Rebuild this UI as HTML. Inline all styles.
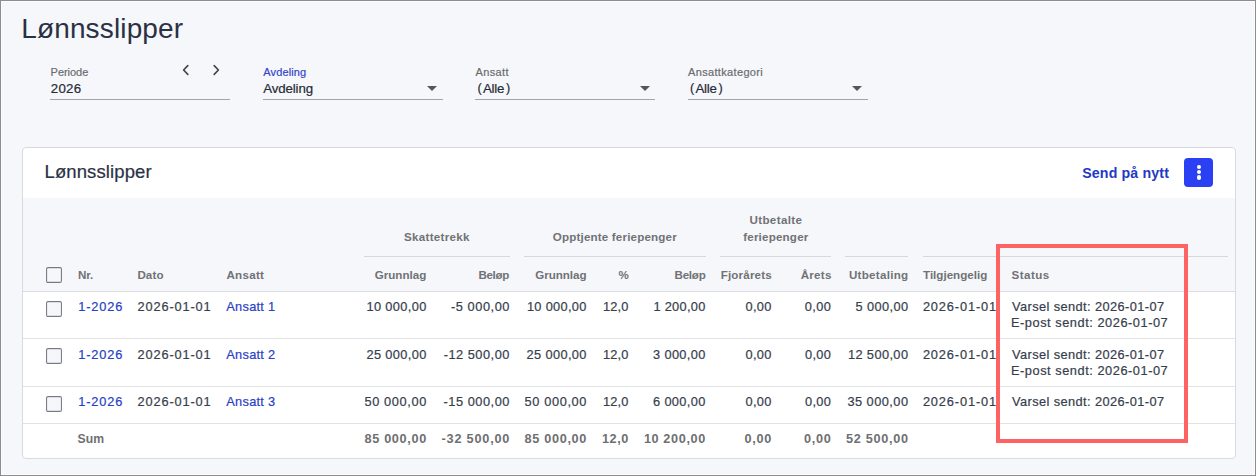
<!DOCTYPE html>
<html lang="no">
<head>
<meta charset="utf-8">
<title>Lønnsslipper</title>
<style>
  html, body { margin: 0; padding: 0; }
  body { width: 1256px; height: 476px; overflow: hidden; position: relative; background: #f6f7fb; font-family: "Liberation Sans", sans-serif; }
  .frame { position: absolute; left: 0; top: 0; width: 1254px; height: 474px; border: 1px solid #8d8d8f; box-shadow: inset 0 0 0 1px #fcfcfe; pointer-events: none; z-index: 10; }
  .t { position: absolute; white-space: nowrap; font-family: "Liberation Sans", sans-serif; }
  .r { -webkit-text-stroke: 0.2px currentColor; }
  .uline { position: absolute; height: 1px; background: #a3a4a8; }
  .tri { position: absolute; width: 0; height: 0; border-left: 5px solid transparent; border-right: 5px solid transparent; border-top: 5px solid #555659; }
  .chev { position: absolute; }
  .card { position: absolute; left: 22px; top: 147px; width: 1212px; height: 310px; border: 1px solid #d9dadf; border-radius: 4px; background: #fff; overflow: hidden; }
  .thead { position: absolute; left: 0; top: 50px; width: 1212px; height: 93px; background: #f6f7fb; border-bottom: 1px solid #dcdde2; }
  .rowline { position: absolute; left: 0; width: 1212px; height: 1px; background: #e1e2e6; }
  .gline { position: absolute; top: 256px; height: 1px; background: #d7d8dd; }
  .cb { position: absolute; }
  .btn { position: absolute; left: 1184px; top: 158px; width: 29px; height: 29px; background: #2b3ff3; border-radius: 4px; }
  .dot { position: absolute; left: 12.8px; width: 4.4px; height: 4.4px; border-radius: 50%; background: #fff; }
  .red { position: absolute; left: 996px; top: 244px; width: 184px; height: 191px; border: 4px solid #fe6262; z-index: 5; }
</style>
</head>
<body>
  <!-- filters -->
  <div class="uline" style="left:50px;top:99px;width:180px"></div>
  <div class="uline" style="left:263px;top:99px;width:180px"></div>
  <div class="uline" style="left:475px;top:99px;width:180px"></div>
  <div class="uline" style="left:688px;top:99px;width:180px"></div>
  <div class="tri" style="left:427.3px;top:86px"></div>
  <div class="tri" style="left:639.7px;top:86px"></div>
  <div class="tri" style="left:852.2px;top:86px"></div>
  <svg class="chev" style="left:180px;top:63px" width="12" height="14" viewBox="0 0 12 14"><path d="M7.8 2.6 L3.6 7 L7.8 11.4" fill="none" stroke="#3d4350" stroke-width="1.6" stroke-linecap="round" stroke-linejoin="round"/></svg>
  <svg class="chev" style="left:210px;top:63px" width="12" height="14" viewBox="0 0 12 14"><path d="M4.2 2.6 L8.4 7 L4.2 11.4" fill="none" stroke="#3d4350" stroke-width="1.6" stroke-linecap="round" stroke-linejoin="round"/></svg>

  <!-- card -->
  <div class="card">
    <div class="thead"></div>
    <div class="rowline" style="top:190px"></div>
    <div class="rowline" style="top:238px"></div>
    <div class="rowline" style="top:275px"></div>
  </div>
  <div class="gline" style="left:364px;width:146px"></div>
  <div class="gline" style="left:524px;width:182px"></div>
  <div class="gline" style="left:720px;width:111px"></div>
  <div class="gline" style="left:845px;width:63px"></div>
  <div class="gline" style="left:923px;width:305px"></div>

  <svg class="cb" style="left:46px;top:267px" width="16" height="16" viewBox="0 0 16 16"><rect x="0.6" y="0.6" width="14.8" height="14.8" rx="1.4" fill="#fbfbfd" stroke="#767a86" stroke-width="1.1"/><rect x="2.2" y="2.2" width="11.6" height="11.6" fill="#f6f7fb"/></svg>
  <svg class="cb" style="left:46px;top:301px" width="16" height="16" viewBox="0 0 16 16"><rect x="0.6" y="0.6" width="14.8" height="14.8" rx="1.4" fill="#fff" stroke="#767a86" stroke-width="1.1"/><rect x="2.2" y="2.2" width="11.6" height="11.6" fill="#f5f6fa"/></svg>
  <svg class="cb" style="left:46px;top:348px" width="16" height="16" viewBox="0 0 16 16"><rect x="0.6" y="0.6" width="14.8" height="14.8" rx="1.4" fill="#fff" stroke="#767a86" stroke-width="1.1"/><rect x="2.2" y="2.2" width="11.6" height="11.6" fill="#f5f6fa"/></svg>
  <svg class="cb" style="left:46px;top:396px" width="16" height="16" viewBox="0 0 16 16"><rect x="0.6" y="0.6" width="14.8" height="14.8" rx="1.4" fill="#fff" stroke="#767a86" stroke-width="1.1"/><rect x="2.2" y="2.2" width="11.6" height="11.6" fill="#f5f6fa"/></svg>

  <div class="btn"><div class="dot" style="top:6.7px"></div><div class="dot" style="top:12px"></div><div class="dot" style="top:17.3px"></div></div>

  <div class="red"></div>
  <div class="frame"></div>
<div class="t" style="left:21.20px;top:14.70px;font-size:28px;line-height:28px;font-weight:400;letter-spacing:0.147px;color:#2a3144">Lønnsslipper</div>
<div class="t r" style="left:50.60px;top:66.90px;font-size:11px;line-height:11px;font-weight:400;letter-spacing:-0.033px;color:#6a6c70">Periode</div>
<div class="t r" style="left:50.80px;top:81.90px;font-size:13.3px;line-height:13.3px;font-weight:400;letter-spacing:0.238px;color:#262b36">2026</div>
<div class="t r" style="left:263.30px;top:66.60px;font-size:11px;line-height:11px;font-weight:400;letter-spacing:0.117px;color:#3344cc">Avdeling</div>
<div class="t r" style="left:263.30px;top:81.90px;font-size:13.3px;line-height:13.3px;font-weight:400;letter-spacing:-0.139px;color:#262b36">Avdeling</div>
<div class="t r" style="left:475.50px;top:66.80px;font-size:11px;line-height:11px;font-weight:400;letter-spacing:0.374px;color:#6a6c70">Ansatt</div>
<div class="t r" style="left:477.60px;top:81.80px;font-size:12.7px;line-height:12.7px;font-weight:400;letter-spacing:0.000px;color:#262b36">(</div>
<div class="t r" style="left:483.00px;top:81.90px;font-size:13.3px;line-height:13.3px;font-weight:400;letter-spacing:-0.259px;color:#262b36">Alle</div>
<div class="t r" style="left:505.90px;top:81.80px;font-size:12.7px;line-height:12.7px;font-weight:400;letter-spacing:0.000px;color:#262b36">)</div>
<div class="t r" style="left:688.00px;top:66.80px;font-size:11px;line-height:11px;font-weight:400;letter-spacing:0.340px;color:#6a6c70">Ansattkategori</div>
<div class="t r" style="left:690.10px;top:81.80px;font-size:12.7px;line-height:12.7px;font-weight:400;letter-spacing:0.000px;color:#262b36">(</div>
<div class="t r" style="left:695.50px;top:81.90px;font-size:13.3px;line-height:13.3px;font-weight:400;letter-spacing:-0.259px;color:#262b36">Alle</div>
<div class="t r" style="left:718.40px;top:81.80px;font-size:12.7px;line-height:12.7px;font-weight:400;letter-spacing:0.000px;color:#262b36">)</div>
<div class="t r" style="left:44.50px;top:162.90px;font-size:18.5px;line-height:18.5px;font-weight:400;letter-spacing:0.113px;color:#2a3144">Lønnsslipper</div>
<div class="t" style="left:1082.20px;top:166.00px;font-size:14.2px;line-height:14.2px;font-weight:700;letter-spacing:0.145px;color:#2338c4">Send på nytt</div>
<div class="t" style="left:403.90px;top:231.30px;font-size:11.6px;line-height:11.6px;font-weight:700;letter-spacing:0.313px;color:#707275">Skattetrekk</div>
<div class="t" style="left:552.80px;top:231.00px;font-size:11.6px;line-height:11.6px;font-weight:700;letter-spacing:0.172px;color:#707275">Opptjente feriepenger</div>
<div class="t" style="left:749.40px;top:214.10px;font-size:11.6px;line-height:11.6px;font-weight:700;letter-spacing:0.381px;color:#707275">Utbetalte</div>
<div class="t" style="left:743.20px;top:230.70px;font-size:11.6px;line-height:11.6px;font-weight:700;letter-spacing:0.197px;color:#707275">feriepenger</div>
<div class="t" style="left:77.90px;top:268.90px;font-size:11.6px;line-height:11.6px;font-weight:700;letter-spacing:-0.022px;color:#707275">Nr.</div>
<div class="t" style="left:137.40px;top:268.90px;font-size:11.6px;line-height:11.6px;font-weight:700;letter-spacing:0.106px;color:#707275">Dato</div>
<div class="t" style="left:226.40px;top:268.90px;font-size:11.6px;line-height:11.6px;font-weight:700;letter-spacing:0.298px;color:#707275">Ansatt</div>
<div class="t" style="left:374.70px;top:268.90px;font-size:11.6px;line-height:11.6px;font-weight:700;letter-spacing:0.008px;color:#707275">Grunnlag</div>
<div class="t" style="left:478.40px;top:268.90px;font-size:11.6px;line-height:11.6px;font-weight:700;letter-spacing:-0.306px;color:#707275">Beløp</div>
<div class="t" style="left:535.20px;top:268.90px;font-size:11.6px;line-height:11.6px;font-weight:700;letter-spacing:-0.035px;color:#707275">Grunnlag</div>
<div class="t" style="left:618.40px;top:268.90px;font-size:11.6px;line-height:11.6px;font-weight:700;letter-spacing:0.129px;color:#707275">%</div>
<div class="t" style="left:674.50px;top:268.90px;font-size:11.6px;line-height:11.6px;font-weight:700;letter-spacing:-0.231px;color:#707275">Beløp</div>
<div class="t" style="left:720.70px;top:268.90px;font-size:11.6px;line-height:11.6px;font-weight:700;letter-spacing:0.179px;color:#707275">Fjorårets</div>
<div class="t" style="left:800.70px;top:268.90px;font-size:11.6px;line-height:11.6px;font-weight:700;letter-spacing:0.252px;color:#707275">Årets</div>
<div class="t" style="left:848.90px;top:268.90px;font-size:11.6px;line-height:11.6px;font-weight:700;letter-spacing:0.278px;color:#707275">Utbetaling</div>
<div class="t" style="left:923.00px;top:268.90px;font-size:11.6px;line-height:11.6px;font-weight:700;letter-spacing:0.007px;color:#707275">Tilgjengelig</div>
<div class="t" style="left:1011.50px;top:268.90px;font-size:11.6px;line-height:11.6px;font-weight:700;letter-spacing:0.463px;color:#707275">Status</div>
<div class="t r" style="left:78.20px;top:300.80px;font-size:12.8px;line-height:12.8px;font-weight:400;letter-spacing:0.854px;color:#2740c8">1-2026</div>
<div class="t r" style="left:137.50px;top:300.80px;font-size:12.8px;line-height:12.8px;font-weight:400;letter-spacing:0.862px;color:#363d4b">2026-01-01</div>
<div class="t r" style="left:226.30px;top:300.80px;font-size:12.8px;line-height:12.8px;font-weight:400;letter-spacing:0.267px;color:#2740c8">Ansatt 1</div>
<div class="t r" style="left:366.40px;top:300.80px;font-size:12.8px;line-height:12.8px;font-weight:400;letter-spacing:0.373px;color:#363d4b">10 000,00</div>
<div class="t r" style="left:451.00px;top:300.80px;font-size:12.8px;line-height:12.8px;font-weight:400;letter-spacing:0.543px;color:#363d4b">-5 000,00</div>
<div class="t r" style="left:526.90px;top:300.80px;font-size:12.8px;line-height:12.8px;font-weight:400;letter-spacing:0.323px;color:#363d4b">10 000,00</div>
<div class="t r" style="left:603.10px;top:300.80px;font-size:12.8px;line-height:12.8px;font-weight:400;letter-spacing:0.137px;color:#363d4b">12,0</div>
<div class="t r" style="left:653.40px;top:300.80px;font-size:12.8px;line-height:12.8px;font-weight:400;letter-spacing:0.301px;color:#363d4b">1 200,00</div>
<div class="t r" style="left:745.60px;top:300.80px;font-size:12.8px;line-height:12.8px;font-weight:400;letter-spacing:0.304px;color:#363d4b">0,00</div>
<div class="t r" style="left:804.70px;top:300.80px;font-size:12.8px;line-height:12.8px;font-weight:400;letter-spacing:0.437px;color:#363d4b">0,00</div>
<div class="t r" style="left:855.50px;top:300.80px;font-size:12.8px;line-height:12.8px;font-weight:400;letter-spacing:0.386px;color:#363d4b">5 000,00</div>
<div class="t r" style="left:922.90px;top:300.80px;font-size:12.8px;line-height:12.8px;font-weight:400;letter-spacing:0.862px;color:#363d4b">2026-01-01</div>
<div class="t r" style="left:1012.00px;top:300.80px;font-size:12.8px;line-height:12.8px;font-weight:400;letter-spacing:0.403px;color:#363d4b">Varsel sendt: 2026-01-07</div>
<div class="t r" style="left:1011.00px;top:316.80px;font-size:12.8px;line-height:12.8px;font-weight:400;letter-spacing:0.535px;color:#363d4b">E-post sendt: 2026-01-07</div>
<div class="t r" style="left:78.20px;top:348.80px;font-size:12.8px;line-height:12.8px;font-weight:400;letter-spacing:0.854px;color:#2740c8">1-2026</div>
<div class="t r" style="left:137.50px;top:348.80px;font-size:12.8px;line-height:12.8px;font-weight:400;letter-spacing:0.862px;color:#363d4b">2026-01-01</div>
<div class="t r" style="left:226.30px;top:348.80px;font-size:12.8px;line-height:12.8px;font-weight:400;letter-spacing:0.267px;color:#2740c8">Ansatt 2</div>
<div class="t r" style="left:366.40px;top:348.80px;font-size:12.8px;line-height:12.8px;font-weight:400;letter-spacing:0.373px;color:#363d4b">25 000,00</div>
<div class="t r" style="left:443.70px;top:348.80px;font-size:12.8px;line-height:12.8px;font-weight:400;letter-spacing:0.503px;color:#363d4b">-12 500,00</div>
<div class="t r" style="left:526.50px;top:348.80px;font-size:12.8px;line-height:12.8px;font-weight:400;letter-spacing:0.373px;color:#363d4b">25 000,00</div>
<div class="t r" style="left:603.10px;top:348.80px;font-size:12.8px;line-height:12.8px;font-weight:400;letter-spacing:0.137px;color:#363d4b">12,0</div>
<div class="t r" style="left:653.10px;top:348.80px;font-size:12.8px;line-height:12.8px;font-weight:400;letter-spacing:0.343px;color:#363d4b">3 000,00</div>
<div class="t r" style="left:745.40px;top:348.80px;font-size:12.8px;line-height:12.8px;font-weight:400;letter-spacing:0.370px;color:#363d4b">0,00</div>
<div class="t r" style="left:804.90px;top:348.80px;font-size:12.8px;line-height:12.8px;font-weight:400;letter-spacing:0.370px;color:#363d4b">0,00</div>
<div class="t r" style="left:847.90px;top:348.80px;font-size:12.8px;line-height:12.8px;font-weight:400;letter-spacing:0.398px;color:#363d4b">12 500,00</div>
<div class="t r" style="left:922.90px;top:348.80px;font-size:12.8px;line-height:12.8px;font-weight:400;letter-spacing:0.862px;color:#363d4b">2026-01-01</div>
<div class="t r" style="left:1012.00px;top:348.80px;font-size:12.8px;line-height:12.8px;font-weight:400;letter-spacing:0.403px;color:#363d4b">Varsel sendt: 2026-01-07</div>
<div class="t r" style="left:1011.00px;top:364.80px;font-size:12.8px;line-height:12.8px;font-weight:400;letter-spacing:0.535px;color:#363d4b">E-post sendt: 2026-01-07</div>
<div class="t r" style="left:78.20px;top:396.00px;font-size:12.8px;line-height:12.8px;font-weight:400;letter-spacing:0.854px;color:#2740c8">1-2026</div>
<div class="t r" style="left:137.50px;top:396.00px;font-size:12.8px;line-height:12.8px;font-weight:400;letter-spacing:0.862px;color:#363d4b">2026-01-01</div>
<div class="t r" style="left:226.30px;top:396.00px;font-size:12.8px;line-height:12.8px;font-weight:400;letter-spacing:0.267px;color:#2740c8">Ansatt 3</div>
<div class="t r" style="left:364.40px;top:396.00px;font-size:12.8px;line-height:12.8px;font-weight:400;letter-spacing:0.623px;color:#363d4b">50 000,00</div>
<div class="t r" style="left:443.50px;top:396.00px;font-size:12.8px;line-height:12.8px;font-weight:400;letter-spacing:0.525px;color:#363d4b">-15 000,00</div>
<div class="t r" style="left:524.50px;top:396.00px;font-size:12.8px;line-height:12.8px;font-weight:400;letter-spacing:0.623px;color:#363d4b">50 000,00</div>
<div class="t r" style="left:603.10px;top:396.00px;font-size:12.8px;line-height:12.8px;font-weight:400;letter-spacing:0.137px;color:#363d4b">12,0</div>
<div class="t r" style="left:653.00px;top:396.00px;font-size:12.8px;line-height:12.8px;font-weight:400;letter-spacing:0.358px;color:#363d4b">6 000,00</div>
<div class="t r" style="left:745.40px;top:396.00px;font-size:12.8px;line-height:12.8px;font-weight:400;letter-spacing:0.370px;color:#363d4b">0,00</div>
<div class="t r" style="left:804.90px;top:396.00px;font-size:12.8px;line-height:12.8px;font-weight:400;letter-spacing:0.370px;color:#363d4b">0,00</div>
<div class="t r" style="left:847.40px;top:396.00px;font-size:12.8px;line-height:12.8px;font-weight:400;letter-spacing:0.461px;color:#363d4b">35 000,00</div>
<div class="t r" style="left:922.90px;top:396.00px;font-size:12.8px;line-height:12.8px;font-weight:400;letter-spacing:0.862px;color:#363d4b">2026-01-01</div>
<div class="t r" style="left:1012.00px;top:396.00px;font-size:12.8px;line-height:12.8px;font-weight:400;letter-spacing:0.403px;color:#363d4b">Varsel sendt: 2026-01-07</div>
<div class="t" style="left:77.50px;top:432.70px;font-size:12.2px;line-height:12.2px;font-weight:700;letter-spacing:0.113px;color:#6e6f72">Sum</div>
<div class="t" style="left:364.50px;top:432.70px;font-size:12.7px;line-height:12.7px;font-weight:700;letter-spacing:0.664px;color:#6e6f72">85 000,00</div>
<div class="t" style="left:441.60px;top:432.70px;font-size:12.7px;line-height:12.7px;font-weight:700;letter-spacing:0.788px;color:#6e6f72">-32 500,00</div>
<div class="t" style="left:524.60px;top:432.70px;font-size:12.7px;line-height:12.7px;font-weight:700;letter-spacing:0.664px;color:#6e6f72">85 000,00</div>
<div class="t" style="left:602.00px;top:432.70px;font-size:12.7px;line-height:12.7px;font-weight:700;letter-spacing:0.554px;color:#6e6f72">12,0</div>
<div class="t" style="left:643.90px;top:432.70px;font-size:12.7px;line-height:12.7px;font-weight:700;letter-spacing:0.614px;color:#6e6f72">10 200,00</div>
<div class="t" style="left:744.50px;top:432.70px;font-size:12.7px;line-height:12.7px;font-weight:700;letter-spacing:0.721px;color:#6e6f72">0,00</div>
<div class="t" style="left:804.00px;top:432.70px;font-size:12.7px;line-height:12.7px;font-weight:700;letter-spacing:0.721px;color:#6e6f72">0,00</div>
<div class="t" style="left:845.90px;top:432.70px;font-size:12.7px;line-height:12.7px;font-weight:700;letter-spacing:0.702px;color:#6e6f72">52 500,00</div>
</body>
</html>
